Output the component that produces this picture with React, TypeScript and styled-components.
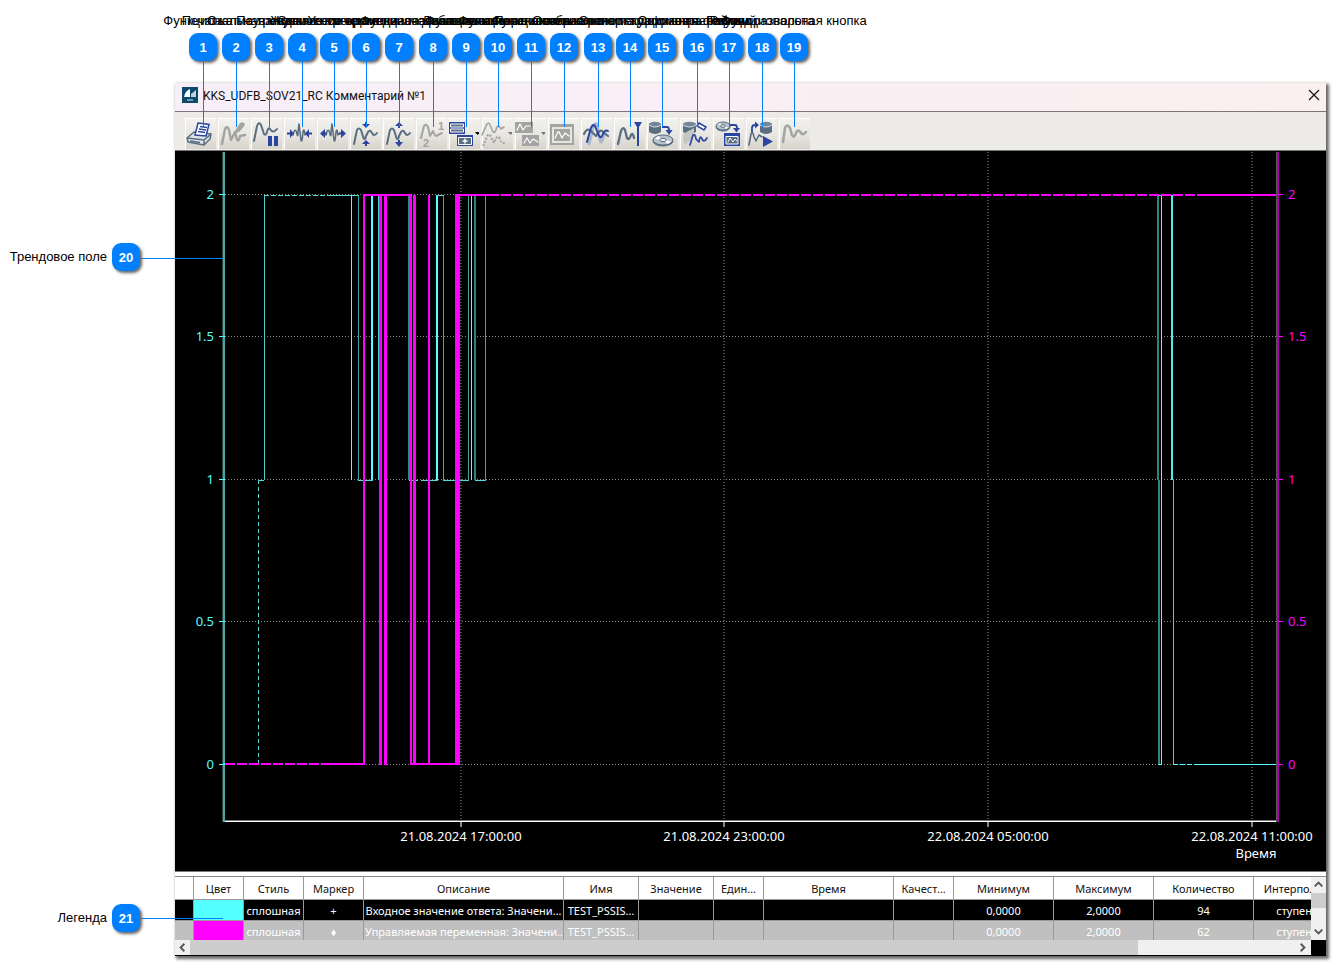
import React from 'react';
import styled, { createGlobalStyle } from 'styled-components';

const GlobalStyle = createGlobalStyle`
  * { box-sizing: border-box; }
  body { margin: 0; background: #fff; font-family: "Noto Sans", "Open Sans", sans-serif; }
  button { font: inherit; }
`;

const Page = styled.main`
  position: relative;
  padding: 83px 9px 12px 175px;
`;

const Window = styled.section`
  display: flex;
  flex-direction: column;
  background: #fff;
  border-bottom: 1px solid #000;
  box-shadow: 2px 2px 3px 1px #666;
`;

const TitleBar = styled.header`
  display: flex;
  align-items: center;
  gap: 5px;
  height: 29px;
  padding: 0 5px 4px 7px;
  background: linear-gradient(90deg, #f8eef8, #faf0f0);
  border-bottom: 1px solid #777;
`;

const Title = styled.h1`
  flex: 1;
  margin: 0;
  padding-top: 2px;
  font-family: Roboto, "Noto Sans", sans-serif;
  font-size: 12px;
  font-weight: 400;
  line-height: 16px;
  color: #111;
`;

const CloseButton = styled.button`
  display: flex;
  padding: 0;
  border: 0;
  background: none;
`;

const Toolbar = styled.div`
  display: flex;
  gap: 2px;
  height: 39px;
  padding: 6px 10px 0;
  background: #ecebe7;
  border-bottom: 1px solid #777;
`;

const ToolButton = styled.button`
  width: 31px;
  height: 31px;
  padding: 0;
  border: 0;
  border-top: 1px solid #fff;
  border-left: 1px solid #fff;
  background: linear-gradient(#f2f1ee, #e9e7e2 50%, #d6d3ca);
  svg { display: block; margin: -1px 0 0 -2px; }
`;

const ChartArea = styled.div`
  background: #000;
  border-bottom: 1px solid #777;
  svg { display: block; width: 100%; height: auto; }
`;

const Legend = styled.div`
  display: grid;
  grid-template-columns: minmax(0, 1fr) 15px;
  margin-top: 4px;
  border-top: 1px solid #888;
  background: #000;
`;

const TableClip = styled.div`
  height: 63px;
  overflow: hidden;
`;

const Table = styled.table`
  width: 1178px;
  table-layout: fixed;
  border-collapse: separate;
  border-spacing: 0;
  font-size: 11px;
  line-height: 16px;
`;

const HeadCell = styled.th`
  height: 23px;
  padding: 2px 2px 0;
  overflow: hidden;
  white-space: nowrap;
  text-overflow: ellipsis;
  font-weight: 400;
  color: #111;
  background: #fff;
  border-right: 1px solid #999;
  border-bottom: 1px solid #999;
`;

const Cell = styled.td<{ $swatch?: string }>`
  height: 21px;
  padding: 2px 1px 0;
  overflow: hidden;
  white-space: nowrap;
  text-align: center;
  background: ${(p) => p.$swatch ?? 'transparent'};
  border-right: 1px solid #999;
  border-bottom: 1px solid #999;
`;

const Row = styled.tr<{ $selected?: boolean }>`
  color: #fff;
  background: ${(p) => (p.$selected ? '#000' : '#c0c0c0')};
`;

const VScroll = styled.div`
  display: flex;
  flex-direction: column;
  justify-content: space-between;
  background: linear-gradient(#f0f0f0 16px, #cdcdcd 16px, #cdcdcd 31px, #f0f0f0 31px);
`;

const HScroll = styled.div`
  display: flex;
  height: 15px;
  background: #f0f0f0;
`;

const HThumb = styled.div`
  flex: 6 1 0;
  background: #cdcdcd;
`;

const HTrack = styled.div`
  flex: 1 1 0;
`;

const ScrollButton = styled.button`
  display: flex;
  flex: none;
  align-items: center;
  justify-content: center;
  width: 15px;
  height: 15px;
  padding: 0;
  border: 0;
  background: #f0f0f0;
`;

const Callout = styled.div<{ $x: number }>`
  position: absolute;
  top: 13px;
  left: ${(p) => p.$x}px;
  width: 0;
  display: flex;
  flex-direction: column;
  align-items: center;
  pointer-events: none;
`;

const SideCallout = styled.div<{ $y: number }>`
  position: absolute;
  top: ${(p) => p.$y}px;
  left: 0;
  width: 140px;
  display: flex;
  align-items: center;
  justify-content: flex-end;
  gap: 5px;
`;

const CalloutText = styled.span`
  font-family: "Liberation Sans", Arial, sans-serif;
  font-size: 13px;
  line-height: 16px;
  white-space: nowrap;
  color: #000;
`;

const Badge = styled.span`
  display: flex;
  flex: none;
  align-items: center;
  justify-content: center;
  width: 28px;
  height: 28px;
  border-radius: 9px;
  background: #0080ff;
  box-shadow: 2px 2px 3px #666;
  color: #fff;
  font-family: "Liberation Sans", Arial, sans-serif;
  font-size: 13px;
  font-weight: 700;
`;

const BadgeDrop = styled(Badge)`
  margin-top: 4px;
`;

const Leader = styled.span`
  width: 1px;
  height: 66px;
  background: #0080ff;
`;

const SideLeader = styled.span<{ $y: number }>`
  position: absolute;
  left: 140px;
  top: ${(p) => p.$y}px;
  width: 83px;
  height: 1px;
  background: #0080ff;
`;

const SLATE = '#5a6e80';
const BLUE = '#2b45a0';
const GRAY = '#a3a3a1';

const Wave = ({ d, color = SLATE, w = 2, dash }: { d: string; color?: string; w?: number; dash?: string }) => (
  <path d={d} fill="none" stroke={color} strokeWidth={w} strokeDasharray={dash} strokeLinejoin="round" strokeLinecap={dash ? 'butt' : 'round'} />
);

const Cylinder = ({ x, y, w = 12, color = SLATE }: { x: number; y: number; w?: number; color?: string }) => (
  <g fill={color}>
    <path d={`M${x} ${y + 2}v8q${w / 2} 4 ${w} 0v-8z`} />
    <ellipse cx={x + w / 2} cy={y + 2} rx={w / 2} ry="2.2" fill="#71879b" />
    <path d={`M${x} ${y + 3}q${w / 2} 4 ${w} 0`} fill="none" stroke="#e8ecef" strokeWidth="0.9" />
  </g>
);

const Disc = ({ cx, cy, rx, ry }: { cx: number; cy: number; rx: number; ry: number }) => (
  <g stroke={SLATE}>
    <ellipse cx={cx} cy={cy + 1} rx={rx} ry={ry} fill={SLATE} />
    <ellipse cx={cx} cy={cy} rx={rx} ry={ry} fill="#b6c3cd" />
    <path d={`M${cx - rx + 2} ${cy - 1}L${cx} ${cy}l${-rx / 2} ${-ry + 1}zM${cx + rx - 2} ${cy + 1}L${cx} ${cy}l${rx / 2} ${ry - 1}z`} fill="#fff" stroke="none" />
    <ellipse cx={cx} cy={cy} rx={rx / 3} ry={ry / 3} fill="#eee" />
  </g>
);

const Caret = ({ color }: { color: string }) => <path d="M27 14h5l-2.500 3z" fill={color} />;

const LONG = 'M5 26L8 12Q10 9 12 12L14.500 20Q16 23 17 18L19 14Q21 11 23 15Q25 19 28 15';
const NARROW = 'M10 17Q12 8 14 16Q15 20 15 14L16 6L18 22Q19 26 20 14Q21 9 22 17L24 15';

const icons: { name: string; off?: boolean; art: React.ReactNode }[] = [
  { name: 'Печать', art: <>
    <path d="M3 20L10 14L27 16L26 21L20 27L4 24z" fill="#dde3e8" stroke={SLATE} strokeWidth="1.500" strokeLinejoin="round" />
    <path d="M3 20L20 22L27 16M20 22v5M6 23l10 1.500" fill="none" stroke={SLATE} strokeWidth="1.500" />
    <path d="M14 5L25 6.500L22 18L11 17z" fill="#fff" stroke={BLUE} strokeWidth="1.500" />
    <path d="M16 8.500l7 1M15 11l7 1M14 13.500l7 1" stroke={BLUE} strokeWidth="1.500" />
  </> },
  { name: 'Правка', off: true, art: <>
    <Wave d="M5 26L8 11Q10 7 12 12L14 22L18 14L20 22Q22 24 23 18L28 17" color={GRAY} w={2.4} />
    <path d="M16 17l2-4 5-8q3-2 5 1-1 3-6 8l-3 1z" fill={GRAY} />
  </> },
  { name: 'Пауза', art: <>
    <Wave d="M4 23L7 8Q9 3 11 7L14 16Q16 18 17 14Q18 9 20 11Q23 16 27 11" />
    <path d="M18 18h4v10h-4zM24 18h4v10h-4z" fill={BLUE} />
  </> },
  { name: 'Сжать по времени', art: <>
    <Wave d={NARROW} w={1.6} />
    <path d="M4 14.500h3v-3.500l4 4.500-4 4.500v-3.500H4zM29 14.500h-3v-3.500l-4 4.500 4 4.500v-3.500h3z" fill={BLUE} />
  </> },
  { name: 'Растянуть по времени', art: <>
    <Wave d={NARROW} w={1.6} />
    <path d="M11 14.500H9v-3.500l-5 4.500 5 4.500v-3.500h2zM23 14.500h2v-3.500l5 4.500-5 4.500v-3.500h-2z" fill={BLUE} />
  </> },
  { name: 'Сжать по значению', art: <>
    <Wave d={LONG} />
    <path d="M13 6h3V4h2v2h3l-4 4zM13 26h3v2h2v-2h3l-4-4z" fill={BLUE} />
  </> },
  { name: 'Растянуть по значению', art: <>
    <Wave d={LONG} />
    <path d="M13 8h3v2h2V8h3l-4-4zM13 24h3v-2h2v2h3l-4 5z" fill={BLUE} />
  </> },
  { name: 'Порядок', off: true, art: <>
    <Wave d="M6 20L9 8Q11 5 13 9L15 18L18 13Q20 20 23 17L27 15" color={GRAY} />
    <g fill={GRAY} fontFamily="Liberation Sans, sans-serif" fontSize="11" fontWeight="700"><text x="23" y="12">1</text><text x="8" y="29">2</text></g>
  </> },
  { name: 'Окна', art: <>
    <path d="M1 4h16v12H1zM9 17h16v11H9z" fill={BLUE} />
    <path d="M2.500 6h13v3h-13zM2.500 11h13v3h-13z" fill={SLATE} stroke="#fff" />
    <path d="M10.500 19.500h13v7h-13z" fill={SLATE} stroke="#fff" />
    <path d="M17 20.500v5M14.500 23h5" stroke="#fff" strokeWidth="1.500" /><Caret color="#000" />
  </> },
  { name: 'Тренды', off: true, art: <>
    <Wave d="M1 17L6 6Q8 4 9 7L12 14Q14 16 16 9Q18 7 20 11L23 9" color={GRAY} w={1.6} />
    <Wave d="M2 28L6 19Q8 14 10 19L13 25Q15 18 18 19Q20 26 24 25" color={GRAY} dash="2 1.5" /><Caret color="#777" />
  </> },
  { name: 'Панели', off: true, art: <>
    <path d="M1 4h18v11H1zM8 17h17v11H8z" fill={GRAY} />
    <Wave d="M3 12l3-6 3 6 3-4 5 0M10 25l3-5 3 5 3-4 5 3" color="#fff" w={1.2} /><Caret color="#777" />
  </> },
  { name: 'Окно', off: true, art: <>
    <path d="M3 6h24v21H3z" fill={GRAY} /><path d="M5 9h20v16H5z" fill="#e6e5e1" />
    <path d="M7 11h16v12H7z" fill={GRAY} /><Wave d="M8 20l3-6q1-1 2 2l2 4 3-5 4 3" color="#fff" w={1.3} />
  </> },
  { name: 'Сравнение', art: <>
    <Wave d="M9 26L12 14Q14 4 17 6L20 22Q21 27 23 20L25 14" color="#aab8ce" w={3} />
    <Wave d="M4 16Q7 9 11 13L16 18Q20 10 23 14L28 18" w={2.2} />
    <Wave d="M7 24L10 13Q12 5 15 8L19 18Q21 21 23 16Q25 11 28 13" color={BLUE} w={2} />
  </> },
  { name: 'Визир', art: <>
    <Wave d="M5 26L8 13Q10 8 12 12L14 20Q16 23 18 17Q20 14 21 20" w={2.3} /><path d="M21 4h8l-3 5v19h-2V9z" fill={BLUE} />
  </> },
  { name: 'Сохранить', art: <>
    <Cylinder x={3} y={4} /><Disc cx={17} cy={22} rx={10} ry={5} />
    <path d="M16 9h5q2 0 2 3" fill="none" stroke={BLUE} strokeWidth="1.800" /><path d="M19.500 12h7L23 17z" fill={BLUE} />
  </> },
  { name: 'Очистить', art: <>
    <Cylinder x={4} y={4} w={13} /><path d="M4 23V16L15 10v9L6 27z" fill="#c6c6c3" />
    <Wave d="M11 27L14 17Q16 15 17 21L20 24Q21 16 23 21Q25 25 28 20" color={BLUE} w={1.7} />
    <path d="M20 5l7 4-2 3-7-4z" fill="#fff" stroke={BLUE} strokeWidth="1.500" />
  </> },
  { name: 'Загрузить', art: <>
    <Disc cx={11} cy={8} rx={7} ry={4} />
    <path d="M18 7h5q2 0 2 3" fill="none" stroke={BLUE} strokeWidth="1.800" /><path d="M21 10h7l-3.500 4.500z" fill={BLUE} />
    <path d="M12 15h16v13H12z" fill={BLUE} /><path d="M14 18.500h12v7.500H14z" fill={SLATE} stroke="#fff" />
    <Wave d="M16 24l2-4 3 4 2-3 2 2" color="#fff" w={1} />
  </> },
  { name: 'Воспроизвести', art: <>
    <Cylinder x={15} y={4} /><path d="M7 15V10Q7 7 10 7h2" fill="none" stroke={BLUE} strokeWidth="1.800" />
    <path d="M10 3.500v7l4-3.500z" fill={BLUE} /><Wave d="M4 27L6 16Q8 13 9 19L11 23L14 17L17 19" w={1.6} /><path d="M18 18v11l10-5.500z" fill={BLUE} />
  </> },
  { name: 'График', off: true, art: <Wave d="M5 24L7 10Q9 5 12 10L14 17Q16 21 18 15Q20 10 23 15Q25 18 28 14" color={GRAY} w={2.5} /> },
];

const FN = 'Функциональная кнопка';
const callouts: [number, string][] = [
  [203, 'Печать'], [236, FN], [269, 'Пауза/пуск'], [302, 'Сжатие тренда по оси времени'],
  [334, 'Увеличение времени'], [366, 'Сжатие тренда по значениям'], [399, 'Увеличение диапазона шкалы'], [433, FN],
  [466, 'Добавить окно'], [498, FN], [531, FN], [564, FN],
  [598, 'Переключение режима просмотра'], [630, 'Отображение текущих значений'],
  [662, 'Экспорт графиков в файлы'], [697, 'Сохранить текущий'], [729, 'Период'],
  [762, 'Режим разворота'], [794, FN],
];

const cols = [19, 50, 60, 60, 200, 75, 75, 50, 130, 60, 100, 100, 100, 99];
const heads = ['', 'Цвет', 'Стиль', 'Маркер', 'Описание', 'Имя', 'Значение', 'Един…', 'Время', 'Качест…', 'Минимум', 'Максимум', 'Количество', 'Интерполяция'];
const rows = [
  ['', '', 'сплошная', '+', 'Входное значение ответа: Значени…', 'TEST_PSSIS…', '', '', '', '', '0,0000', '2,0000', '94', 'ступенька'],
  ['', '', 'сплошная', '♦', 'Управляемая переменная: Значени…', 'TEST_PSSIS…', '', '', '', '', '0,0000', '2,0000', '62', 'ступенька'],
];
const swatches = ['#55ffff', '#ff00ff'];

const yTicks: [number, string][] = [[43, '2'], [185, '1.5'], [328, '1'], [470, '0.5'], [613, '0']];
const xTicks: [number, string][] = [[286, '21.08.2024 17:00:00'], [549, '21.08.2024 23:00:00'], [813, '22.08.2024 05:00:00'], [1077, '22.08.2024 11:00:00']];

/* Vertical strokes of the first trend: x, width, top, bottom, colour. */
const cyanBars: [number, number, number, number, string][] = [
  [89, 1, 44, 329, '#4fd0d0'], [176, 1, 44, 329, '#55ffff'], [183, 1, 44, 329, '#3fa5a5'],
  [196, 2, 44, 329, '#55ffff'], [203, 1, 44, 329, '#4fd0d0'], [233, 2, 44, 329, '#2f8585'],
  [238, 1, 44, 329, '#4fd0d0'], [261, 2, 44, 329, '#55ffff'], [268, 1, 44, 329, '#3fa5a5'],
  [293, 1, 44, 329, '#3fa5a5'], [296, 1, 44, 329, '#55ffff'], [299, 2, 44, 329, '#2f8080'],
  [310, 1, 44, 329, '#3fa5a5'], [982, 2, 44, 329, '#2f8585'], [986, 1, 44, 614, '#55ffff'],
  [996, 2, 44, 329, '#55e6e6'], [983, 2, 329, 614, '#2f8585'], [998, 1, 329, 614, '#4fd0d0'],
];
/* Vertical strokes of the second trend: x, width. */
const magentaBars: [number, number][] = [[188, 2], [204, 3], [209, 3], [235, 2], [238, 3], [253, 2], [280, 5]];

const Chart = () => (
  <svg viewBox="0 0 1151 720" role="img" aria-label="Трендовое поле" fontSize="13" fontFamily="Noto Sans, sans-serif">
    <g shapeRendering="crispEdges" fill="none">
      {yTicks.map(([y]) => <path key={y} d={`M50 ${y}.500H1101`} stroke="#868686" strokeDasharray="1 2" />)}
      {xTicks.map(([x]) => <path key={x} d={`M${x} 1V669`} stroke="#4a4a4a" strokeWidth="2" strokeDasharray="1 2" />)}
      <path d="M48 669.500H1103" stroke="#777" /><path d="M48 670.500H1103" stroke="#fff" />
      {xTicks.map(([x]) => <path key={x} d={`M${x} 671v5`} stroke="#888" strokeWidth="2" />)}
      <path d="M47.500 1V671" stroke="#2a4545" /><path d="M49 1V671" stroke="#4ba5a5" strokeWidth="2" />
      {cyanBars.map(([x, w, a, b, c], i) => <rect key={i} x={x} y={a} width={w} height={b - a} fill={c} />)}
      <g stroke="#55d8d8">
        <path d="M83.500 613V329" strokeDasharray="4 3" />
        <path d="M83 329.500H89M183 329.500H198M234 329.500H243M246 329.500H263M268 329.500H294M300 329.500H311" />
        <path d="M89 44.500H155" strokeDasharray="5 2" /><path d="M155 44.500H184M261 44.500H269M293 44.500H311M982 44.500H998" />
        <path d="M983 613.500H987M1023 613.500H1103" stroke="#55ffff" /><path d="M998 613.500H1023" strokeDasharray="5 2" stroke="#55ffff" />
      </g>
      <g stroke="#ff00ff" strokeWidth="2">
        <path d="M50 613H155" strokeDasharray="10 2" /><path d="M155 613H190M235 613H284" />
        {magentaBars.map(([x, w]) => <rect key={x} x={x} y={44} width={w} height={570} fill="#ff00ff" stroke="none" />)}
        <path d="M188 44H236M280 44H314" /><path d="M314 44H1022" strokeDasharray="10 2" /><path d="M1022 44H1102" />
      </g>
      <path d="M1101.500 1V671" stroke="#555" /><path d="M1103 1V671" stroke="#aa00aa" strokeWidth="2" />
      {yTicks.map(([y]) => <g key={y}><path d={`M44 ${y}.500h6`} stroke="#55ffff" /><path d={`M1103 ${y}.500h5`} stroke="#ff00ff" /></g>)}
    </g>
    {yTicks.map(([y, t]) => <g key={y}><text x="39" y={y + 5} textAnchor="end" fill="#55ffff">{t}</text><text x="1113" y={y + 5} fill="#ff00ff">{t}</text></g>)}
    <g fill="#fff" textAnchor="middle">
      {xTicks.map(([x, t]) => <text key={x} x={x} y="690">{t}</text>)}
      <text x="1081" y="707">Время</text>
    </g>
  </svg>
);

const arrows = { left: 'M10 4L6 8l4 4', right: 'M5 4l4 4-4 4', up: 'M4 10l4-4 4 4', down: 'M4 5l4 4 4-4' };
const Arrow = ({ dir, label }: { dir: keyof typeof arrows; label: string }) => (
  <ScrollButton aria-label={label}>
    <svg width="15" height="15" viewBox="0 0 16 16"><path d={arrows[dir]} fill="none" stroke="#555" strokeWidth="2" /></svg>
  </ScrollButton>
);

export default function App() {
  return (
    <Page>
      <GlobalStyle />
      <Window>
        <TitleBar>
          <svg width="16" height="16" viewBox="0 0 16 16">
            <path d="M0 0h16v16H0z" fill="#0b4a6b" /><path d="M8 2v8H2q1-6 6-8z" fill="#fff" />
            <path d="M9 7l5-4v7H9z" fill="#b9d3df" /><path d="M5 13h6" stroke="#8fb6c8" strokeWidth="1.500" />
          </svg>
          <Title>KKS_UDFB_SOV21_RC Комментарий №1</Title>
          <CloseButton aria-label="Закрыть">
            <svg width="14" height="14" viewBox="0 0 14 14"><path d="M2 2l10 10M12 2L2 12" stroke="#111" strokeWidth="1.200" /></svg>
          </CloseButton>
        </TitleBar>
        <Toolbar role="toolbar">
          {icons.map((i) => (
            <ToolButton key={i.name} aria-label={i.name} disabled={i.off}>
              <svg width="31" height="31" viewBox="0 0 31 31">{i.art}</svg>
            </ToolButton>
          ))}
        </Toolbar>
        <ChartArea><Chart /></ChartArea>
        <Legend>
          <TableClip>
            <Table>
              <colgroup>{cols.map((w, i) => <col key={i} width={w} />)}</colgroup>
              <thead><tr>{heads.map((h, i) => <HeadCell key={i}>{h}</HeadCell>)}</tr></thead>
              <tbody>
                {rows.map((r, n) => (
                  <Row key={n} $selected={n === 0}>
                    {r.map((c, i) => <Cell key={i} $swatch={i === 1 ? swatches[n] : undefined}>{c}</Cell>)}
                  </Row>
                ))}
              </tbody>
            </Table>
          </TableClip>
          <VScroll><Arrow dir="up" label="Вверх" /><Arrow dir="down" label="Вниз" /></VScroll>
          <HScroll>
            <Arrow dir="left" label="Влево" />
            <HThumb />
            <HTrack />
            <Arrow dir="right" label="Вправо" />
          </HScroll>
        </Legend>
      </Window>
      {callouts.map(([x, t], i) => (
        <Callout key={x} $x={x}>
          <CalloutText>{t}</CalloutText>
          <BadgeDrop>{i + 1}</BadgeDrop>
          <Leader />
        </Callout>
      ))}
      <SideLeader $y={258} /><SideLeader $y={918} />
      <SideCallout $y={243}><CalloutText>Трендовое поле</CalloutText><Badge>20</Badge></SideCallout>
      <SideCallout $y={904}><CalloutText>Легенда</CalloutText><Badge>21</Badge></SideCallout>
    </Page>
  );
}
